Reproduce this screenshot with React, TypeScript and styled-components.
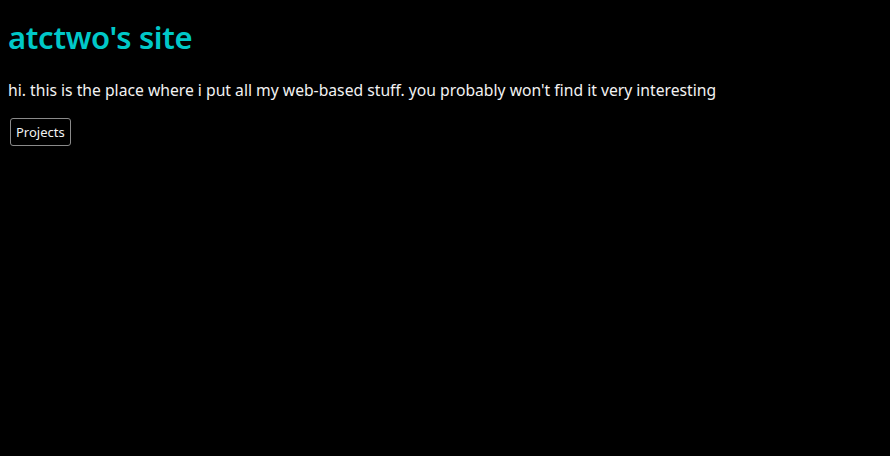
import React from "react";
import styled, { createGlobalStyle } from "styled-components";

const Global = createGlobalStyle`
  html, body { background: #000; }
  body { margin: 8px; font-family: "Noto Sans", sans-serif; color: #f2f2f2; }
`;

const Title = styled.h1`
  font-size: 31px;
  font-weight: 600;
  color: #00c8c8;
  margin: 11px 0 24px;
  line-height: 1.2;
  letter-spacing: -0.3px;
`;

const Intro = styled.p`
  font-size: 15.7px;
  margin: 0 0 17px;
  line-height: 1.3;
`;

const Nav = styled.nav`
  display: flex;
  gap: 8px;
  padding-left: 2px;
`;

const NavButton = styled.a`
  display: inline-flex;
  align-items: center;
  height: 28px;
  box-sizing: border-box;
  padding: 0 5px;
  border: 1px solid #8a8a8a;
  border-radius: 3px;
  font-size: 13px;
  color: #f2f2f2;
  text-decoration: none;
`;

export default function App() {
  return (
    <>
      <Global />
      <Title>atctwo's site</Title>
      <Intro>
        hi. this is the place where i put all my web-based stuff. you probably won't find it very interesting
      </Intro>
      <Nav>
        <NavButton href="#">Projects</NavButton>
      </Nav>
    </>
  );
}
